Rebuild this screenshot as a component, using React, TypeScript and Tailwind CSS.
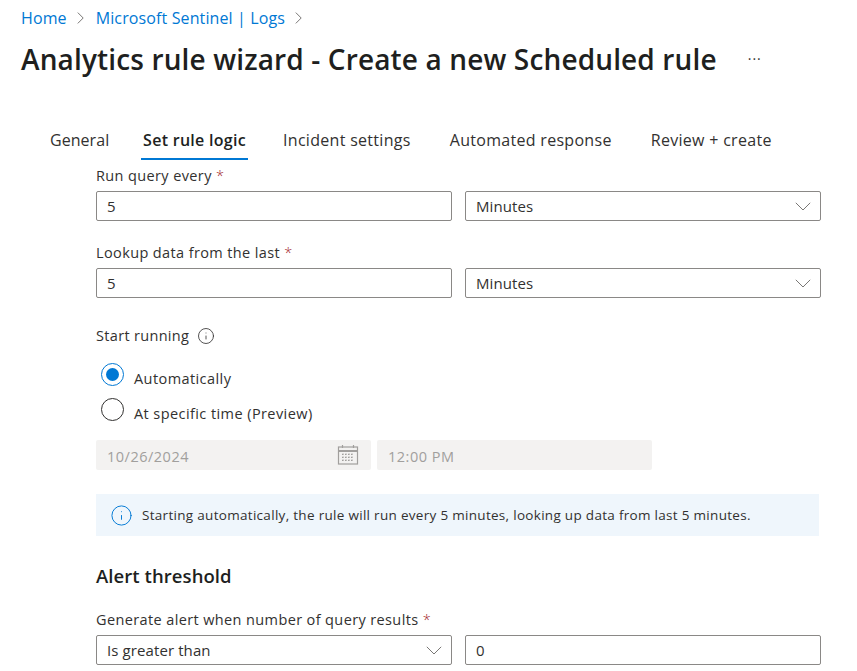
import { Info } from "lucide-react";

const font = "font-['Open_Sans','Noto_Sans',sans-serif]";

function Required({ children }: { children: string }) {
  return (
    <div className="h-[20px] text-[14.5px] leading-[20px] tracking-[0.38px] text-[#323130]">
      {children} <span className="font-light text-[#a4262c]">*</span>
    </div>
  );
}

function TextBox({ value }: { value: string }) {
  return (
    <div className="flex h-[30px] w-[356px] items-center rounded-[2px] border border-[#8a8886] px-[10px] text-[15px] tracking-[0.1px] text-[#323130]">
      {value}
    </div>
  );
}

function DropChevron() {
  return (
    <svg width="16" height="9" viewBox="0 0 16 9" fill="none" stroke="#797775" strokeWidth="1">
      <path d="M0.8 0.8 8 8 15.2 0.8" />
    </svg>
  );
}

function CrumbChevron() {
  return (
    <svg width="7" height="12" viewBox="0 0 7 12" fill="none" stroke="#797775" strokeWidth="1">
      <path d="M0.8 0.6 6.2 6 0.8 11.4" />
    </svg>
  );
}

function SelectBox({ value }: { value: string }) {
  return (
    <div className="flex h-[30px] w-[356px] items-center justify-between rounded-[2px] border border-[#8a8886] pr-[9px] pl-[10px] text-[15px] tracking-[0.1px] text-[#323130]">
      {value}
      <DropChevron />
    </div>
  );
}

function Radio({ checked, label }: { checked?: boolean; label: string }) {
  return (
    <div className="flex h-[35px] items-center pl-[5px]">
      <span className={`flex h-[23px] w-[23px] -translate-y-[4px] items-center justify-center rounded-full border-[1.5px] ${checked ? "border-[#0078d4]" : "border-[#323130]"}`}>
        {checked && <span className="h-[13px] w-[13px] rounded-full bg-[#0078d4]" />}
      </span>
      <span className="ml-[10px] text-[14.5px] tracking-[0.42px] text-[#323130]">{label}</span>
    </div>
  );
}

function CalendarIcon() {
  return (
    <svg width="22" height="22" viewBox="0 0 22 22" fill="none" stroke="#a19f9d" strokeWidth="1.2">
      <rect x="1.5" y="3" width="19" height="17" />
      <path d="M1.5 7h19" strokeWidth="2" />
      <path d="M5.5 1v3M16.5 1v3" />
      <path d="M5 10.5h12M5 13.5h12M5 16.5h12M6 9.5v8M9 9.5v8M12 9.5v8M15 9.5v8" strokeDasharray="1.4 1.6" />
    </svg>
  );
}

export default function App() {
  return (
    <div className={`${font} h-[671px] w-[857px] overflow-hidden bg-white`}>
      <nav className="flex h-[36px] items-center pl-[21px] text-[16px] tracking-[0.12px] text-[#0078d4]">
        <span>Home</span>
        <span className="mr-[12px] ml-[10px]">
          <CrumbChevron />
        </span>
        <span>Microsoft Sentinel | Logs</span>
        <span className="ml-[10px]">
          <CrumbChevron />
        </span>
      </nav>

      <div className="flex h-[45px] items-center pl-[21px]">
        <h1 className="text-[28px] font-semibold tracking-[0.14px] text-[#201f1e]">Analytics rule wizard - Create a new Scheduled rule</h1>
        <span className="ml-[31px] text-[14px] leading-none tracking-[1px] text-[#323130]">···</span>
      </div>

      <div className="mt-[43px] flex h-[36px] items-center pl-[50px] text-[16px] tracking-[0.3px] text-[#323130]">
        <span className="w-[91px] pb-[4px] tracking-[0.05px]">General</span>
        <span className="relative mr-[35px] flex h-full w-[107px] items-center justify-center pb-[4px] font-semibold tracking-[0.28px] text-[#201f1e]">
          Set rule logic
          <span className="absolute right-0 bottom-0 left-0 h-[2px] bg-[#0078d4]" />
        </span>
        <span className="mr-[39px] pb-[4px]">Incident settings</span>
        <span className="mr-[39px] pb-[4px]">Automated response</span>
        <span className="pb-[4px]">Review + create</span>
      </div>

      <main className="pl-[96px]">
        <div className="mt-[6px]">
          <Required>Run query every</Required>
          <div className="mt-[5px] flex gap-[13px]">
            <TextBox value="5" />
            <SelectBox value="Minutes" />
          </div>
        </div>

        <div className="mt-[22px]">
          <Required>Lookup data from the last</Required>
          <div className="mt-[5px] flex gap-[13px]">
            <TextBox value="5" />
            <SelectBox value="Minutes" />
          </div>
        </div>

        <div className="mt-[28px] flex h-[20px] items-center gap-[8px] text-[14.5px] tracking-[0.32px] text-[#323130]">
          Start running
          <Info className="h-[18px] w-[18px]" strokeWidth={1.1} />
        </div>

        <div className="mt-[15px]">
          <Radio checked label="Automatically" />
          <Radio label="At specific time (Preview)" />
        </div>

        <div className="mt-[9px] flex gap-[6px] text-[14.5px] tracking-[0.5px] text-[#a19f9d]">
          <div className="flex h-[30px] w-[275px] items-center justify-between rounded-[2px] bg-[#f3f2f1] pr-[12px] pl-[11px]">
            <span className="pt-[3px]">10/26/2024</span>
            <CalendarIcon />
          </div>
          <div className="flex h-[30px] w-[275px] items-center rounded-[2px] bg-[#f3f2f1] pt-[3px] pl-[11px]">12:00 PM</div>
        </div>

        <div className="mt-[24px] flex h-[42px] w-[723px] items-center bg-[#eff6fc] pl-[14px] text-[13.5px] tracking-[0.3px] text-[#323130]">
          <Info className="mr-[9px] h-[23px] w-[23px] text-[#0078d4]" strokeWidth={1} />
          <span className="pt-[1px]">Starting automatically, the rule will run every 5 minutes, looking up data from last 5 minutes.</span>
        </div>

        <h2 className="mt-[26px] h-[28px] text-[18.5px] leading-[28px] font-semibold tracking-[0.07px] text-[#201f1e]">Alert threshold</h2>

        <div className="mt-[20px]">
          <Required>Generate alert when number of query results</Required>
          <div className="mt-[5px] flex gap-[13px]">
            <SelectBox value="Is greater than" />
            <TextBox value="0" />
          </div>
        </div>
      </main>
    </div>
  );
}
